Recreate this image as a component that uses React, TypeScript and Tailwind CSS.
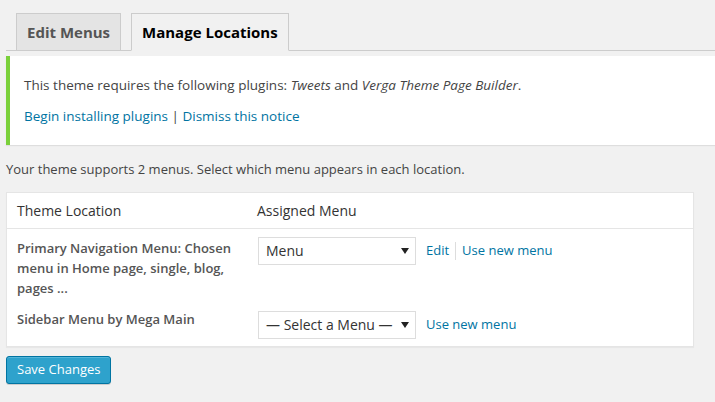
import React from "react";

const Caret = () => (
  <svg width="8" height="6" viewBox="0 0 8 6" className="shrink-0">
    <path d="M0 0 L8 0 L4 6 Z" fill="#222" />
  </svg>
);

const MenuSelect = ({ label }: { label: string }) => (
  <div className="flex h-[28px] w-[158px] items-center justify-between border border-[#dddddd] bg-white pl-[7px] pr-[6px] text-[14px] text-[#333]">
    <span>{label}</span>
    <Caret />
  </div>
);

export default function App() {
  return (
    <div
      className="min-h-[402px] w-[715px] bg-[#f1f1f1] text-[13px] text-[#444]"
      style={{ fontFamily: '"Open Sans", sans-serif' }}
    >
      <div className="pt-[13px]">
        <div className="ml-[6px] flex items-end border-b border-[#cccccc] pl-[10px]">
          <div className="-mb-px flex h-[38px] items-center border border-[#cccccc] bg-[#e4e4e4] px-[10px] text-[15px] font-bold text-[#555]">
            Edit Menus
          </div>
          <div className="-mb-px ml-[10px] flex h-[38px] items-center border border-[#cccccc] border-b-[#f1f1f1] bg-[#f1f1f1] px-[10px] text-[15px] font-bold text-[#000]">
            Manage Locations
          </div>
        </div>
      </div>

      <div className="ml-[6px] mt-[5px] flex h-[89px] flex-col justify-center gap-[11px] border-l-4 border-[#7ad03a] bg-white pl-[14px] text-[13.5px] shadow-[0_1px_1px_rgba(0,0,0,0.08)]">
        <p>
          This theme requires the following plugins: <em>Tweets</em> and{" "}
          <em>Verga Theme Page Builder</em>.
        </p>
        <p className="text-[#0074a2]">
          Begin installing plugins <span className="text-[#444]">|</span> Dismiss this notice
        </p>
      </div>

      <p className="ml-[6px] mt-[15px]">
        Your theme supports 2 menus. Select which menu appears in each location.
      </p>

      <div className="ml-[6px] mt-[12px] w-[688px] border border-[#e5e5e5] bg-white shadow-[0_1px_1px_rgba(0,0,0,0.04)]">
        <div className="flex h-[36px] items-center border-b border-[#e5e5e5] text-[14px] text-[#333]">
          <div className="w-[250px] pl-[10px]">Theme Location</div>
          <div>Assigned Menu</div>
        </div>
        <div className="flex pt-[8px] pb-[3px]">
          <div className="w-[251px] pl-[10px] pr-[8px] pt-[1px] font-semibold leading-[20px] text-[#555]">
            Primary Navigation Menu: Chosen menu in Home page, single, blog, pages ...
          </div>
          <div className="flex h-[28px] items-center">
            <MenuSelect label="Menu" />
            <a className="ml-[10px] text-[#0074a2]">Edit</a>
            <span className="mx-[6px] h-[18px] w-px bg-[#dddddd]" />
            <a className="text-[#0074a2]">Use new menu</a>
          </div>
        </div>
        <div className="flex pt-[10px] pb-[7px]">
          <div className="-mt-[2px] w-[251px] pl-[10px] font-semibold leading-[20px] text-[#555]">
            Sidebar Menu by Mega Main
          </div>
          <div className="flex h-[28px] items-center">
            <MenuSelect label="— Select a Menu —" />
            <a className="ml-[10px] text-[#0074a2]">Use new menu</a>
          </div>
        </div>
      </div>

      <button className="ml-[6px] mt-[9px] h-[28px] rounded-[3px] border border-[#0074a2] bg-[#2ea2cc] px-[10px] text-[13px] text-white shadow-[inset_0_1px_0_rgba(120,200,230,0.5),0_1px_0_rgba(0,0,0,0.15)]">
        Save Changes
      </button>
    </div>
  );
}
